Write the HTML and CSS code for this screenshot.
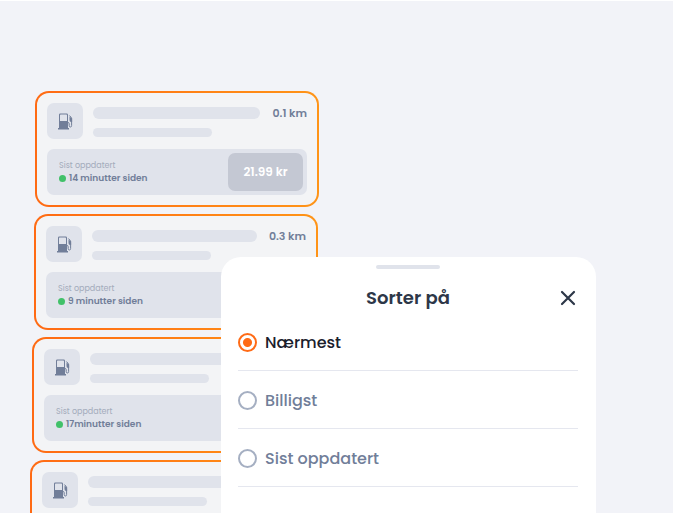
FILE: index.html
```html
<!DOCTYPE html>
<html lang="no">
<head>
<meta charset="utf-8">
<meta name="viewport" content="width=device-width,initial-scale=1.0">
<title>Sorter på</title>
<link rel="stylesheet" href="styles.css">
</head>
<body>
<!-- fuel pump icon, shared by the cards -->
<svg class="defs" width="0" height="0" aria-hidden="true">
<symbol id="pump" viewBox="0 0 15 17">
<path fill="currentColor" fill-rule="evenodd" d="M1 1.800Q1 .5 2.300 .5H8.700Q10 .5 10 1.800V15H11V16.500H0V15H1ZM2 2.200V8H9V2.200Q9 1.500 8.300 1.500H2.700Q2 1.500 2 2.200Z"/>
<path fill="none" stroke="currentColor" stroke-width="1" d="M10 9.500Q11.200 9.500 11.200 10.700V12.500Q11.200 14 12.400 14T13.600 12.500V5.500Q13.600 4.500 11.400 2.500"/>
<path fill="currentColor" d="M11.500 3.500L14.100 5.500V9H12.800Q11.500 8.500 11.500 7Z"/>
</symbol>
</svg>
<main class="page">
<section class="hero">
<div class="stations">
<article class="card">
<div class="card-top">
<div class="tile"><svg class="pump"><use href="#pump"/></svg></div>
<div class="lines">
<div class="line-row"><span class="line"></span><span class="distance">0.1 km</span></div>
<span class="line short"></span>
</div>
</div>
<div class="info">
<div class="updated">
<p class="label">Sist oppdatert</p>
<p class="time"><span class="dot"></span>14 minutter siden</p>
</div>
<button class="price" type="button">21.99 kr</button>
</div>
</article>
<article class="card">
<div class="card-top">
<div class="tile"><svg class="pump"><use href="#pump"/></svg></div>
<div class="lines">
<div class="line-row"><span class="line"></span><span class="distance">0.3 km</span></div>
<span class="line short"></span>
</div>
</div>
<div class="info">
<div class="updated">
<p class="label">Sist oppdatert</p>
<p class="time"><span class="dot"></span>9 minutter siden</p>
</div>
</div>
</article>
<article class="card">
<div class="card-top">
<div class="tile"><svg class="pump"><use href="#pump"/></svg></div>
<div class="lines">
<div class="line-row"><span class="line"></span></div>
<span class="line short"></span>
</div>
</div>
<div class="info">
<div class="updated">
<p class="label">Sist oppdatert</p>
<p class="time"><span class="dot"></span>17minutter siden</p>
</div>
</div>
</article>
<article class="card">
<div class="card-top">
<div class="tile"><svg class="pump"><use href="#pump"/></svg></div>
<div class="lines">
<div class="line-row"><span class="line"></span></div>
<span class="line short"></span>
</div>
</div>
<div class="info"></div>
</article>
</div>
</section>
<form class="sheet">
<div class="handle"></div>
<div class="sheet-head">
<h1>Sorter på</h1>
<button class="close" type="button" aria-label="Lukk">
<svg width="16" height="16" viewBox="0 0 16 16"><path d="M2 2L14 14M14 2L2 14" fill="none" stroke="currentColor" stroke-width="2.200" stroke-linecap="round"/></svg>
</button>
</div>
<label class="option"><input type="radio" name="sort" checked><span>Nærmest</span></label>
<label class="option"><input type="radio" name="sort"><span>Billigst</span></label>
<label class="option"><input type="radio" name="sort"><span>Sist oppdatert</span></label>
</form>
</main>
</body>
</html>
```
FILE: styles.css
```css
*
{
box-sizing:border-box;
}
body
{
margin:0;
background:#fff;
font-family:Poppins,Inter,"Open Sans",sans-serif;
color:#717e99;
}
p, h1
{
margin:0;
}
.defs
{
position:absolute;
}
.page
{
position:relative;
height:100vh;
overflow:hidden;
padding:1px 0 8px;
}
.hero
{
height:100%;
overflow:hidden;
background:#f2f3f8;
padding:90px 35px 0;
}
.stations
{
display:flex;
flex-direction:column;
gap:7px;
max-width:284px;
}
/* every card sits a little further left than the one above */
.card
{
--shift:0px;
margin-left:calc(var(--shift) * -1);
margin-right:var(--shift);
display:flex;
flex-direction:column;
gap:10px;
padding:10px;
border:2px solid transparent;
border-radius:14px;
background:linear-gradient(#f3f4f6,#f3f4f6) padding-box,linear-gradient(90deg,#ff6a13,#ff9417) border-box;
}
.card:nth-child(2)
{
--shift:1px;
}
.card:nth-child(3)
{
--shift:3px;
}
.card:nth-child(4)
{
--shift:5px;
}
.card-top
{
display:flex;
gap:10px;
}
.tile
{
display:flex;
align-items:center;
justify-content:center;
width:36px;
height:36px;
border-radius:7px;
background:#e0e3eb;
}
.pump
{
width:15px;
height:17px;
}
.lines
{
flex:1;
display:flex;
flex-direction:column;
gap:5px;
}
.line-row
{
display:flex;
align-items:center;
gap:12px;
height:20px;
}
.line
{
flex:1;
height:12px;
border-radius:6px;
background:#e0e3eb;
}
.short
{
flex:none;
width:119px;
height:9px;
}
.distance
{
font-size:11px;
line-height:16px;
font-weight:600;
}
.info
{
display:flex;
align-items:center;
justify-content:space-between;
height:46px;
padding:4px 4px 4px 12px;
border-radius:7px;
background:#e0e3eb;
}
.label
{
font-size:8px;
line-height:12px;
color:#a3abbb;
}
.time
{
display:flex;
align-items:center;
gap:3px;
font-size:9px;
line-height:13px;
font-weight:600;
}
.dot
{
width:7px;
height:7px;
border-radius:50%;
background:#41c169;
}
.price
{
height:38px;
min-width:75px;
padding:0 8px;
border:0;
border-radius:7px;
background:#c4c8d3;
color:#fff;
font-family:inherit;
font-size:12px;
font-weight:600;
}
/* bottom sheet over the list */
.sheet
{
position:absolute;
top:257px;
bottom:0;
left:221px;
width:calc(100% - 298px);
max-width:375px;
padding:8px 18px 0 17px;
border-radius:20px 20px 0 0;
background:#fff;
}
.handle
{
width:64px;
height:4px;
margin:0 auto;
border-radius:2px;
background:#e0e3eb;
}
.sheet-head
{
display:grid;
grid-template-columns:20px 1fr 20px;
align-items:center;
height:30px;
margin-top:14px;
color:#2d3748;
}
.sheet-head h1
{
grid-column:2;
font-size:18px;
line-height:30px;
font-weight:600;
text-align:center;
}
.close
{
display:flex;
align-items:center;
justify-content:center;
width:20px;
height:20px;
padding:0;
border:0;
background:none;
color:inherit;
}
.option
{
display:flex;
align-items:center;
gap:8px;
height:58px;
padding-top:1px;
border-bottom:1px solid #e5e7ef;
font-size:16px;
font-weight:500;
}
.option:has(:checked)
{
color:#1a202c;
}
.option input
{
appearance:none;
width:19px;
height:19px;
margin:0;
border:2px solid #a5afc2;
border-radius:50%;
}
.option input:checked
{
border-color:#ff6b16;
background:radial-gradient(circle,#ff6b16 4px,#fff 5px);
}
```
